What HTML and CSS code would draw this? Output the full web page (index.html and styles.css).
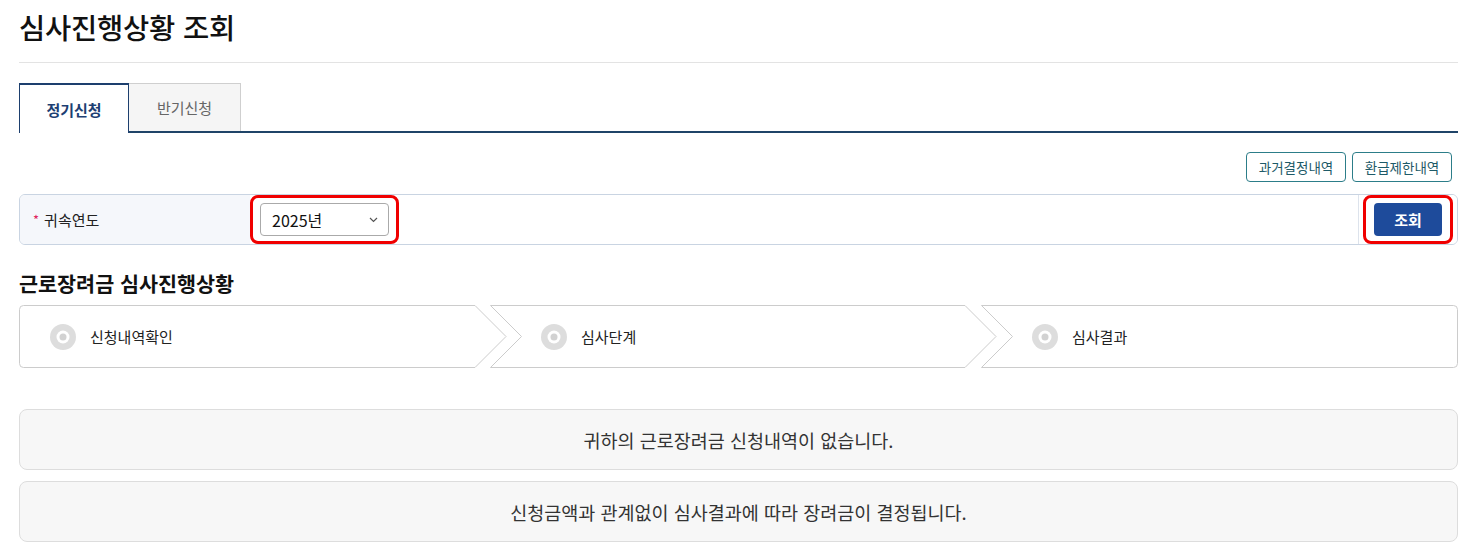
FILE: index.html
```html
<!DOCTYPE html>
<html lang="ko">
<head>
<meta charset="utf-8">
<title>심사진행상황 조회</title>
<link rel="stylesheet" href="styles.css">
</head>
<body>
<div class="page">
  <div class="title-bar">
    <h1 class="title">심사진행상황 조회</h1>
  </div>

  <div class="tabs">
    <div class="tab tab-active">정기신청</div>
    <div class="tab">반기신청</div>
  </div>

  <div class="top-actions">
    <button class="btn-outline">과거결정내역</button>
    <button class="btn-outline">환급제한내역</button>
  </div>

  <div class="search-row">
    <div class="search-label"><span class="req">*</span>귀속연도</div>
    <div class="search-value">
      <div class="hl">
        <div class="fake-select">
          <span>2025년</span>
          <svg class="chev" width="9" height="6" viewBox="0 0 9 6"><path d="M1 1 L4.5 4.5 L8 1" fill="none" stroke="#555" stroke-width="1.2"/></svg>
        </div>
      </div>
    </div>
    <div class="search-btn-cell">
      <div class="hl hl-btn">
        <button class="btn-primary">조회</button>
      </div>
    </div>
  </div>

  <h2 class="section-title">근로장려금 심사진행상황</h2>

  <div class="steps">
    <div class="step step-first">
      <svg class="step-shape" viewBox="0 0 488 63" preserveAspectRatio="none"><path d="M4.5 0.5 H456 L487 31.5 L456 62.5 H4.5 Q0.5 62.5 0.5 58.5 V4.5 Q0.5 0.5 4.5 0.5 Z" fill="#fff" stroke="#cccccc" vector-effect="non-scaling-stroke"/></svg>
      <div class="step-body">
        <svg class="step-icon" width="26" height="26" viewBox="0 0 26 26"><circle cx="13" cy="13" r="13" fill="#dddddd"/><circle cx="13" cy="13" r="6.5" fill="#fff"/><circle cx="13" cy="13" r="3.5" fill="#d2d2d2"/></svg>
        <span>신청내역확인</span>
      </div>
    </div>
    <div class="step step-mid">
      <svg class="step-shape" viewBox="0 0 507 63" preserveAspectRatio="none"><path d="M0.5 0.5 H475 L506 31.5 L475 62.5 H0.5 L31.5 31.5 Z" fill="#fff" stroke="#cccccc" vector-effect="non-scaling-stroke"/></svg>
      <div class="step-body">
        <svg class="step-icon" width="26" height="26" viewBox="0 0 26 26"><circle cx="13" cy="13" r="13" fill="#dddddd"/><circle cx="13" cy="13" r="6.5" fill="#fff"/><circle cx="13" cy="13" r="3.5" fill="#d2d2d2"/></svg>
        <span>심사단계</span>
      </div>
    </div>
    <div class="step step-last">
      <svg class="step-shape" viewBox="0 0 477 63" preserveAspectRatio="none"><path d="M0.5 0.5 H472.5 Q476.5 0.5 476.5 4.5 V58.5 Q476.5 62.5 472.5 62.5 H0.5 L31.5 31.5 Z" fill="#fff" stroke="#cccccc" vector-effect="non-scaling-stroke"/></svg>
      <div class="step-body">
        <svg class="step-icon" width="26" height="26" viewBox="0 0 26 26"><circle cx="13" cy="13" r="13" fill="#dddddd"/><circle cx="13" cy="13" r="6.5" fill="#fff"/><circle cx="13" cy="13" r="3.5" fill="#d2d2d2"/></svg>
        <span>심사결과</span>
      </div>
    </div>
  </div>

  <div class="messages">
    <div class="msg">귀하의 근로장려금 신청내역이 없습니다.</div>
    <div class="msg">신청금액과 관계없이 심사결과에 따라 장려금이 결정됩니다.</div>
  </div>
</div>
</body>
</html>
```

FILE: styles.css
```css
* { box-sizing: border-box; }

html, body {
  margin: 0;
  padding: 0;
  background: #fff;
}

body {
  font-family: "Noto Sans CJK KR", "Noto Sans", sans-serif;
  color: #222;
}

.page {
  padding: 0 15px 0 19px;
}

.title-bar {
  padding-top: 7px;
  padding-bottom: 15px;
  border-bottom: 1px solid #e3e3e3;
}

.title {
  margin: 0;
  font-size: 28.5px;
  line-height: 40px;
  font-weight: 500;
  color: #111;
  letter-spacing: -0.2px;
}

/* tabs */
.tabs {
  display: flex;
  margin-top: 20px;
  border-bottom: 2px solid #1f4468;
}

.tab {
  height: 48px;
  display: flex;
  align-items: center;
  justify-content: center;
  font-size: 15px;
  color: #666;
  background: #f5f5f5;
  border-top: 1px solid #cfcfcf;
  border-right: 1px solid #cfcfcf;
  width: 112px;
}

.tab-active {
  width: 110px;
  background: #fff;
  color: #1d3f73;
  font-weight: 700;
  border-top: 2px solid #1d3f6e;
  border-left: 1px solid #1d3f6e;
  border-right: 1px solid #1d3f6e;
  height: 50px;
  margin-bottom: -2px;
}

/* top action buttons */
.top-actions {
  display: flex;
  justify-content: flex-end;
  gap: 6px;
  margin-top: 19px;
  padding-right: 6px;
}

.btn-outline {
  height: 30px;
  padding: 0;
  font-family: inherit;
  font-size: 13.5px;
  color: #1d5a68;
  background: #fff;
  border: 1px solid #2c7d89;
  border-radius: 4px;
  width: 100px;
}

/* search row */
.search-row {
  display: flex;
  margin-top: 12px;
  height: 51px;
  border: 1px solid #c9d4e2;
  border-radius: 6px;
  overflow: hidden;
}

.search-label {
  width: 230px;
  background: #f5f7fb;
  display: flex;
  align-items: center;
  padding-left: 13px;
  font-size: 15px;
  color: #222;
}

.req {
  color: #e0245e;
  margin-right: 5px;
  font-size: 13px;
}

.search-value {
  flex: 1;
  display: flex;
  align-items: center;
  background: #fff;
}

.hl {
  border: 3px solid #f00000;
  border-radius: 8px;
  padding: 5px 7px;
  height: 49px;
}

.fake-select {
  width: 129px;
  height: 33px;
  border: 1px solid #aaa;
  border-radius: 4px;
  display: flex;
  align-items: center;
  justify-content: space-between;
  padding: 0 10px 0 11px;
  font-size: 16px;
  color: #111;
  background: #fff;
}

.chev { display: block; }

.search-btn-cell {
  width: 99px;
  border-left: 1px solid #dde3ec;
  display: flex;
  align-items: center;
  justify-content: center;
  background: #fff;
}

.hl-btn {
  padding: 5px 8px;
}

.btn-primary {
  width: 68px;
  height: 33px;
  background: #1e4b9b;
  color: #fff;
  border: none;
  border-radius: 4px;
  font-family: inherit;
  font-size: 15px;
  font-weight: 700;
}

/* section */
.section-title {
  margin: 24px 0 0;
  font-size: 20.7px;
  line-height: 28px;
  font-weight: 600;
  color: #111;
}

.steps {
  display: flex;
  margin-top: 8px;
  height: 63px;
}

.step {
  position: relative;
  height: 63px;
}

.step-first { flex: 488 1 0; }
.step-mid { flex: 507 1 0; margin-left: -17px; }
.step-last { flex: 477 1 0; margin-left: -16px; }

.step-shape {
  position: absolute;
  inset: 0;
  width: 100%;
  height: 100%;
  display: block;
}

.step-body {
  position: relative;
  height: 100%;
  display: flex;
  align-items: center;
  gap: 14px;
  font-size: 15px;
  color: #222;
}

.step-first .step-body { padding-left: 31px; }
.step-mid .step-body,
.step-last .step-body { padding-left: 51px; }

.step-icon { flex: none; display: block; }

/* messages */
.messages {
  margin-top: 41px;
  display: flex;
  flex-direction: column;
  gap: 11px;
}

.msg {
  height: 61px;
  background: #f7f7f7;
  border: 1px solid #dddddd;
  border-radius: 8px;
  display: flex;
  align-items: center;
  justify-content: center;
  font-size: 18.5px;
  color: #333;
}
```
